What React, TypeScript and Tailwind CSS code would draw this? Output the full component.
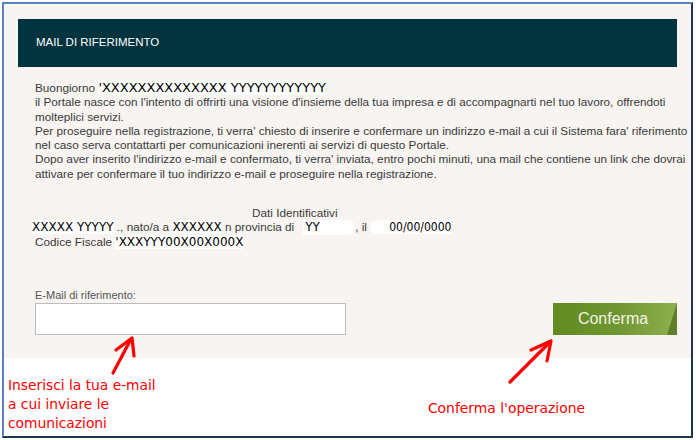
const body = "font-['Liberation_Sans',Arial,sans-serif] text-[11.75px] leading-[14.3px] text-[#3a3a3a]";
const masked = "bg-white font-['DejaVu_Sans',Verdana,sans-serif] text-[12px] text-black";

function Arrows() {
  return (
    <svg className="pointer-events-none absolute left-0 top-0" width="696" height="440" viewBox="0 0 696 440">
      <g stroke="#ff0000" strokeWidth="3.2" strokeLinecap="round" strokeLinejoin="round" fill="none">
        {/* arrow to the e-mail field */}
        <path d="M113 373 L131 339" />
        <path d="M116 350 L132 338 L134 356" />
        {/* arrow to the confirm button */}
        <path d="M510 382 L550 342" />
        <path d="M531 350 L551 341 L547 361" />
      </g>
    </svg>
  );
}

export default function App() {
  return (
    <div className="relative h-[440px] w-[696px] bg-white p-[2px]">
      <div className="flex h-[436px] w-[691px] flex-col border-[2px] border-l-[#5a82be] border-t-[#5a82be] border-r-[#1f3352] border-b-[#1f3352]">
        {/* form panel */}
        <div className="flex h-[354px] flex-col bg-[#f7f4f1] pl-[14px] pr-[14px] pt-[15px]">
          <div className="flex h-[48px] items-center bg-[#02343f] pl-[18px] font-['Liberation_Sans',Arial,sans-serif] text-[11.5px] text-white">
            MAIL DI RIFERIMENTO
          </div>

          <div className={`mt-[14px] pl-[17px] ${body}`}>
            <div className="whitespace-nowrap">
              Buongiorno <span className={`${masked} text-[13px]`}>'XXXXXXXXXXXXXX YYYYYYYYYYYY</span>
            </div>
            <div className="whitespace-nowrap">
              il Portale nasce con l'intento di offrirti una visione d'insieme della tua impresa e di accompagnarti nel tuo lavoro, offrendoti
            </div>
            <div>molteplici servizi.</div>
            <div className="whitespace-nowrap">
              Per proseguire nella registrazione, ti verra' chiesto di inserire e confermare un indirizzo e-mail a cui il Sistema fara' riferimento
            </div>
            <div className="whitespace-nowrap">nel caso serva contattarti per comunicazioni inerenti ai servizi di questo Portale.</div>
            <div className="whitespace-nowrap">
              Dopo aver inserito l'indirizzo e-mail e confermato, ti verra' inviata, entro pochi minuti, una mail che contiene un link che dovrai
            </div>
            <div className="whitespace-nowrap">attivare per confermare il tuo indirizzo e-mail e proseguire nella registrazione.</div>
          </div>

          <div className={`mt-[25px] pl-[14px] ${body}`}>
            <div className="pl-[220px]">Dati Identificativi</div>
            <div className="whitespace-nowrap">
              <span className={masked}>XXXXX YYYYY</span> ., nato/a a <span className={masked}>XXXXXX</span> n provincia di
              <span className={`${masked} ml-[9px] inline-block w-[52px] rounded-r-full pl-[2px]`}>YY</span>, il{" "}
              <span className={`${masked} rounded-l-full pl-[19px] font-['DejaVu_Sans_Condensed','DejaVu_Sans',sans-serif] text-[11px]`}>00/00/0000</span>
            </div>
            <div className="pl-[3px] whitespace-nowrap">
              Codice Fiscale <span className={masked}>'XXXYYY00X00X000X</span>
            </div>
          </div>

          <div className="mt-[40px] flex items-end justify-between pl-[17px]">
            <div className="flex flex-col">
              <label className="font-['Liberation_Sans',Arial,sans-serif] text-[11px] leading-[13px] text-[#555]">E-Mail di riferimento:</label>
              <input className="mt-[1px] h-[32px] w-[311px] border border-[#bdbdbd] bg-white outline-none" />
            </div>
            <button className="relative h-[32px] w-[124px] overflow-hidden bg-gradient-to-r from-[#628a1f] via-[#6f9530] to-[#8fb04e] font-['Liberation_Sans',Arial,sans-serif] text-[16px] text-[#f1f4e6]">
              <span className="absolute right-0 top-0 h-[32px] w-[10px] bg-[#5f7f2c] [clip-path:polygon(100%_0,100%_100%,0_100%)]" />
              <span className="relative pr-[4px]">Conferma</span>
            </button>
          </div>
        </div>

        {/* annotations */}
        <div className="flex flex-1 items-start justify-between bg-white">
          <div className="mt-[18px] pl-[4px] font-['DejaVu_Sans',Verdana,sans-serif] text-[13.8px] leading-[19px] text-[#ff0000]">
            <div>Inserisci la tua e-mail</div>
            <div>a cui inviare le</div>
            <div>comunicazioni</div>
          </div>
          <div className="mr-[106px] mt-[40px] font-['DejaVu_Sans',Verdana,sans-serif] text-[13.9px] text-[#ff0000]">
            Conferma l'operazione
          </div>
        </div>
      </div>
      <Arrows />
    </div>
  );
}
